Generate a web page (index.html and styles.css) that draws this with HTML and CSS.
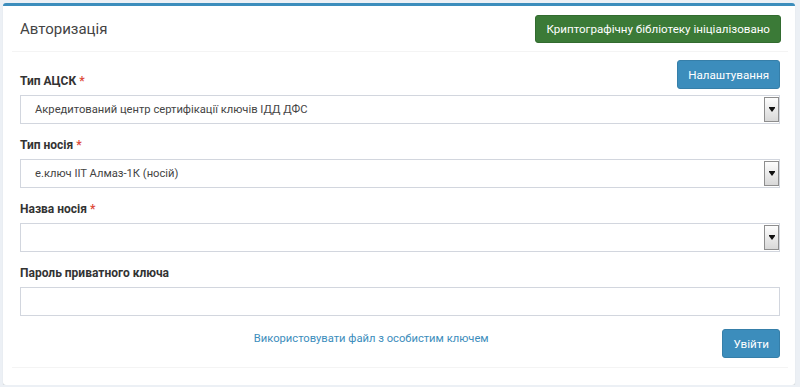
FILE: index.html
```html
<!DOCTYPE html>
<html>
<head>
  <title>Авторизація</title>
  <link rel="stylesheet" href="styles.css">
</head>
<body>
  <div class="box">
    <div class="box-header">
      <h3 class="box-title">Авторизація</h3>
      <button class="btn btn-success">Криптографічну бібліотеку ініціалізовано</button>
    </div>

    <div class="box-body">
      <div class="tools">
        <button class="btn btn-primary">Налаштування</button>
      </div>

      <div class="form-group">
        <label>Тип АЦСК <span class="req">*</span></label>
        <div class="select">
          <span class="select-text">Акредитований центр сертифікації ключів ІДД ДФС</span>
          <span class="select-arrow"></span>
        </div>
      </div>

      <div class="form-group">
        <label>Тип носія <span class="req">*</span></label>
        <div class="select">
          <span class="select-text">е.ключ ІІТ Алмаз-1К (носій)</span>
          <span class="select-arrow"></span>
        </div>
      </div>

      <div class="form-group">
        <label>Назва носія <span class="req">*</span></label>
        <div class="select">
          <span class="select-text"></span>
          <span class="select-arrow"></span>
        </div>
      </div>

      <div class="form-group">
        <label>Пароль приватного ключа</label>
        <input type="password" class="form-control">
      </div>

      <div class="actions">
        <a href="#" class="file-link">Використовувати файл з особистим ключем</a>
        <button class="btn btn-primary">Увійти</button>
      </div>
    </div>

    <div class="box-footer"></div>
  </div>
</body>
</html>
```

FILE: styles.css
```css
/* Форма авторизації */
body {
  margin: 0;
  padding: 3px 5px 0 3px;
  background: #ecf0f5;
  font-family: Roboto, "Open Sans", sans-serif;
  font-size: 12px;
  color: #333;
}

.box {
  background: #fff;
  border-top: 3px solid #3c8dbc;
  border-radius: 3px;
  box-shadow: 0 1px 1px rgba(0, 0, 0, 0.15);
}

.box-header {
  display: flex;
  justify-content: space-between;
  align-items: center;
  margin: 0 7px 0 9px;
  padding: 9px 7px 8px 8px;
  border-bottom: 1px solid #f4f4f4;
}

.box-title {
  margin: 0;
  font-size: 15px;
  font-weight: normal;
  color: #444;
}

.btn {
  font-family: inherit;
  font-size: 11.6px;
  line-height: 16px;
  color: #fff;
  border-radius: 3px;
  border: 1px solid transparent;
  padding: 5px 10px;
  cursor: pointer;
}

.btn-success {
  background: #3b7a37;
  border-color: #326b2f;
}

.btn-primary {
  background: #3c8dbc;
  border-color: #367fa9;
}

.box-body {
  padding: 8px 15px 0 17px;
}

.tools {
  display: flex;
  justify-content: flex-end;
  height: 13px;
}

.tools .btn {
  height: 29px;
}

.form-group {
  margin-bottom: 13px;
}

label {
  display: block;
  font-weight: bold;
  line-height: 17px;
  margin-bottom: 5px;
}

.req {
  color: #dd4b39;
}

.select {
  display: flex;
  align-items: stretch;
  height: 29px;
  border: 1px solid #d2d6de;
  box-sizing: border-box;
}

.select-text {
  flex: 1;
  padding: 6px 14px;
  line-height: 15px;
  font-size: 11.2px;
  color: #444;
}

.select-arrow {
  width: 13px;
  margin: 1px 0;
  border: 1px solid #8e8e8e;
  background: linear-gradient(#fdfdfd, #d8d8d8);
  display: flex;
  align-items: center;
  justify-content: center;
}

.select-arrow::after {
  content: "";
  width: 0;
  height: 0;
  border-left: 3px solid transparent;
  border-right: 3px solid transparent;
  border-top: 4px solid #111;
  box-shadow: 0 -1px 0 #111;
}

.form-control {
  display: block;
  width: 100%;
  height: 29px;
  box-sizing: border-box;
  border: 1px solid #d2d6de;
}

.actions {
  display: flex;
  align-items: flex-start;
}

.file-link {
  flex: 1;
  text-align: center;
  color: #3c8dbc;
  text-decoration: none;
  font-size: 11.2px;
  line-height: 17px;
  margin-top: 1px;
}

.actions .btn {
  height: 29px;
}

.box-footer {
  margin: 9px 7px 0 9px;
  padding-bottom: 17px;
  border-top: 1px solid #f4f4f4;
}
```
